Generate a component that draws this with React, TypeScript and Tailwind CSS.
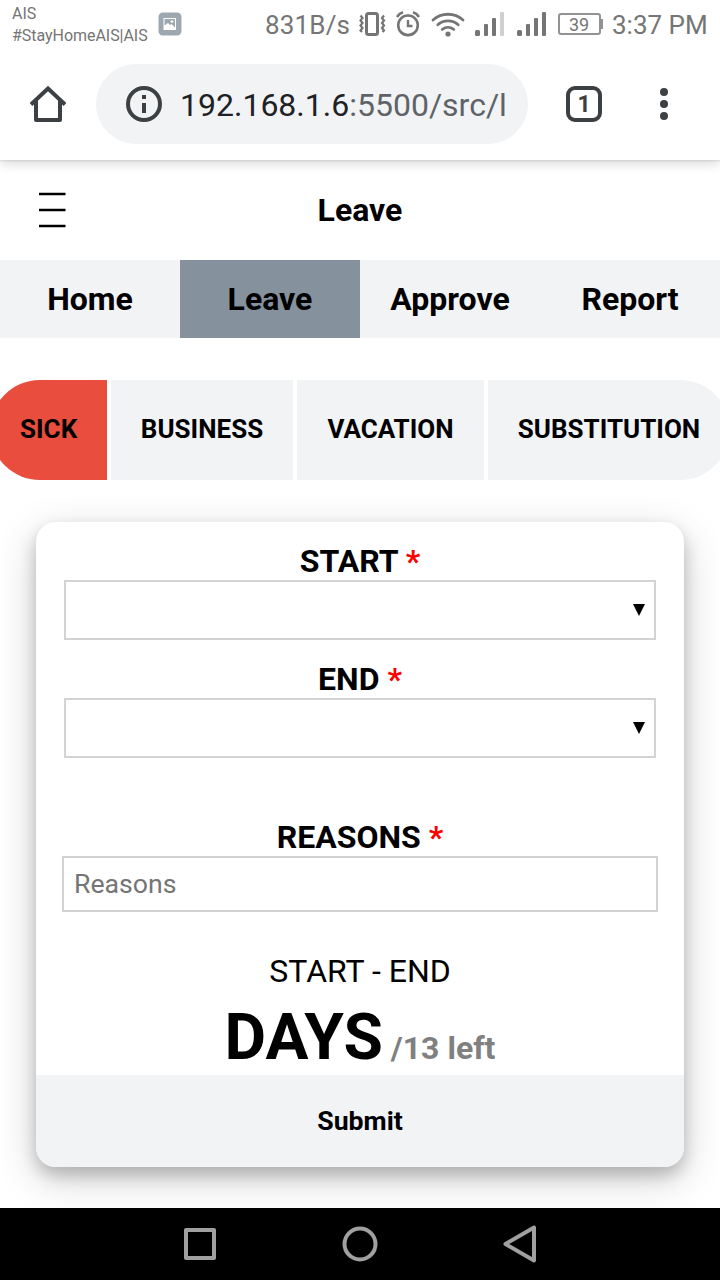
import React from "react";

const tabs = ["Home", "Leave", "Approve", "Report"];

function StatusBar() {
  return (
    <div className="relative z-20 flex h-12 w-full shrink-0 bg-white text-[#757575]">
      <div className="ml-3 w-[146px] whitespace-nowrap pt-[3px] text-[16px] leading-[22px] tracking-[-0.04px]">
        <div>AIS</div>
        <div>#StayHomeAIS|AIS</div>
      </div>
      <svg className="mt-3 h-6 w-6 shrink-0" viewBox="0 0 24 24">
        <rect x="0.5" y="0.5" width="23" height="23" rx="4.500" fill="#9da7af" />
        <path d="M5.5 6H18v12H5.5z" fill="#fff" />
        <path d="M6.500 7h10.500v8.500L13.500 12l-1.500 1-2-2-3.500 2.500z" fill="#9da7af" />
        <path d="M14 8v3M12.500 9.500h3" stroke="#fff" strokeWidth="1.200" />
      </svg>
      <div className="ml-[83px] flex h-12 items-center pt-[3px]">
        <span className="w-[94px] whitespace-nowrap text-[26px] tracking-[0.15px]">831B/s</span>
      </div>
      <svg className="h-12 w-[250px] shrink-0" viewBox="359 0 250 48" fill="none" stroke="#757575">
        <rect x="366.500" y="13.500" width="11" height="21" rx="2" strokeWidth="3" />
        <path d="M360.500 15.500l2 2.500-2 2.500 2 2.500-2 2.500 2 2.500-2 2.500 1.500 1.500M384 15.500l-2 2.500 2 2.500-2 2.500 2 2.500-2 2.500 2 2.500-1.500 1.500" strokeWidth="2.200" />
        <circle cx="408" cy="25.300" r="9.800" strokeWidth="2.600" />
        <path d="M408 20v6h4.500" strokeWidth="2.400" />
        <path d="M397 17q2-3.500 6-4.700M419 17q-2-3.500-6-4.700" strokeWidth="2.600" />
        <path d="M433 20a22.500 22.500 0 0 1 30 0M437.800 24.800a15.500 15.500 0 0 1 20.400 0M442.300 29.300a9.500 9.500 0 0 1 11.400 0" strokeWidth="2.800" strokeLinecap="round" />
        <circle cx="448" cy="34" r="2.600" fill="#757575" stroke="none" />
        <g fill="#757575" stroke="none">
          <rect x="475" y="30" width="5" height="6" rx="1.500" />
          <rect x="484" y="24" width="4" height="12" rx="1" />
          <rect x="492" y="18" width="4" height="18" rx="1" />
          <rect x="500" y="12" width="4" height="24" rx="1" fill="#cfcfcf" />
          <rect x="517" y="30" width="5" height="6" rx="1.500" />
          <rect x="526" y="24" width="4" height="12" rx="1" />
          <rect x="534" y="18" width="4" height="18" rx="1" />
          <rect x="542" y="12" width="4" height="24" rx="1" />
        </g>
        <rect x="559" y="14" width="41" height="20" rx="2" stroke="#929292" strokeWidth="2" />
        <path d="M601 19h2v10h-2z" fill="#929292" stroke="none" />
        <text x="579" y="31" textAnchor="middle" fontSize="18" fill="#757575" stroke="none">39</text>
      </svg>
      <div className="ml-[3px] flex h-12 items-center whitespace-nowrap pt-[3px] text-[26px]">3:37 PM</div>
    </div>
  );
}

function BrowserBar() {
  return (
    <div className="relative z-10 flex h-28 shrink-0 items-start bg-white pt-4 shadow-[0_1px_2px_rgba(0,0,0,0.1),0_3px_12px_rgba(0,0,0,0.16)]">
      <svg className="ml-6 h-20 w-12 shrink-0" viewBox="24 64 48 80" fill="none" stroke="#3c4043" strokeWidth="4" strokeLinejoin="round">
        <path d="M36 101v19h24v-19" />
        <path d="M31 104.500 48 88.500l17 16" strokeLinejoin="miter" />
      </svg>
      <div className="ml-6 flex h-20 w-[432px] items-center rounded-full bg-[#f1f3f5] pl-[30px]">
        <svg className="h-9 w-9 shrink-0" viewBox="0 0 36 36">
          <circle cx="18" cy="18" r="16" fill="none" stroke="#3c4043" strokeWidth="4" />
          <path d="M16 9h4v4h-4zM16 17h4v10h-4z" fill="#3c4043" />
        </svg>
        <div className="ml-[18px] whitespace-nowrap pt-px text-[32px] text-[#202124]">
          192.168.1.6<span className="text-[#5f6368]">:5500/src/l</span>
        </div>
      </div>
      <div className="ml-[38px] mt-[22px] flex h-9 w-9 items-center justify-center rounded-[9px] border-4 border-[#3c4043] pt-[2px] text-[23px] font-bold text-[#3c4043]">1</div>
      <svg className="ml-[52px] h-20 w-5" viewBox="0 0 20 80" fill="#3c4043">
        <circle cx="10" cy="28" r="4" />
        <circle cx="10" cy="40" r="4" />
        <circle cx="10" cy="52" r="4" />
      </svg>
    </div>
  );
}

function Label({ children }: { children: string }) {
  return (
    <div className="h-[38px] text-center text-[32px] font-bold leading-[38px]">
      {children} <span className="text-[#f00]">*</span>
    </div>
  );
}

function DateSelect() {
  return (
    <div className="mx-7 flex h-[60px] items-center justify-end border-2 border-[#d3d3d3] bg-white pr-[9px]">
      <svg className="h-3 w-3" viewBox="0 0 12 12"><path d="M0 0h12L6 12z" /></svg>
    </div>
  );
}

export default function App() {
  return (
    <div className="flex h-[1280px] w-[720px] flex-col overflow-hidden bg-white font-['Roboto',sans-serif] text-black">
      <StatusBar />
      <BrowserBar />
      <header className="relative flex h-[100px] shrink-0 items-center justify-center">
        <svg className="absolute left-[39px] top-8 h-9 w-[27px]" viewBox="0 0 27 36" stroke="#000" strokeWidth="2.600">
          <path d="M0 2h26.500M0 18h26.500M0 34h26.500" />
        </svg>
        <h1 className="text-[32px] font-bold">Leave</h1>
      </header>
      <nav className="grid h-[78px] shrink-0 grid-cols-4 bg-[#f1f3f5]">
        {tabs.map((t) => (
          <button key={t} className={t === "Leave" ? "bg-[#85919d] text-[32px] font-bold" : "text-[32px] font-bold"}>{t}</button>
        ))}
      </nav>
      <div className="-ml-[10px] mt-[42px] flex h-[100px] w-[740px] shrink-0 gap-1 text-[26px] font-bold">
        <button className="w-[117px] rounded-l-[50px] bg-[#e84d3d] pb-[2px] pl-[30px] text-left">SICK</button>
        <button className="w-[182px] bg-[#f1f3f5] pb-[2px]">BUSINESS</button>
        <button className="w-[187px] bg-[#f1f3f5] pb-[2px]">VACATION</button>
        <button className="w-[242px] rounded-r-[50px] bg-[#f1f3f5] pb-[2px]">SUBSTITUTION</button>
      </div>
      <main className="mx-9 mt-[42px] flex h-[645px] shrink-0 flex-col overflow-hidden rounded-[20px] bg-white pt-5 shadow-[0_8px_16px_rgba(0,0,0,0.2),0_12px_40px_rgba(0,0,0,0.19)]">
        <Label>START</Label>
        <DateSelect />
        <div className="h-5" />
        <Label>END</Label>
        <DateSelect />
        <div className="h-[60px]" />
        <Label>REASONS</Label>
        <input className="mx-[26px] h-14 shrink-0 border-2 border-[#d3d3d3] px-[10px] text-[26.67px] placeholder:text-[#757575]" placeholder="Reasons" />
        <div className="mt-10 h-[38px] text-center text-[32px] leading-[38px]">START - END</div>
        <div className="h-[85px] text-center text-[64px] font-bold leading-[96px]">
          DAYS<span className="text-[32px] text-[#808080]"> /13 left</span>
        </div>
        <button className="h-[92px] shrink-0 bg-[#f1f3f5] text-[26.67px] font-bold">Submit</button>
      </main>
      <footer className="relative z-10 mt-auto flex h-[72px] shrink-0 bg-black">
        <svg className="h-[72px] w-[720px]" viewBox="0 0 720 72" fill="none" stroke="#a0a0a0" strokeWidth="4" strokeLinejoin="round">
          <rect x="186" y="22" width="28" height="28" />
          <circle cx="360" cy="36" r="15.500" />
          <path d="M505.500 36 534 19.500v33z" />
        </svg>
      </footer>
    </div>
  );
}
